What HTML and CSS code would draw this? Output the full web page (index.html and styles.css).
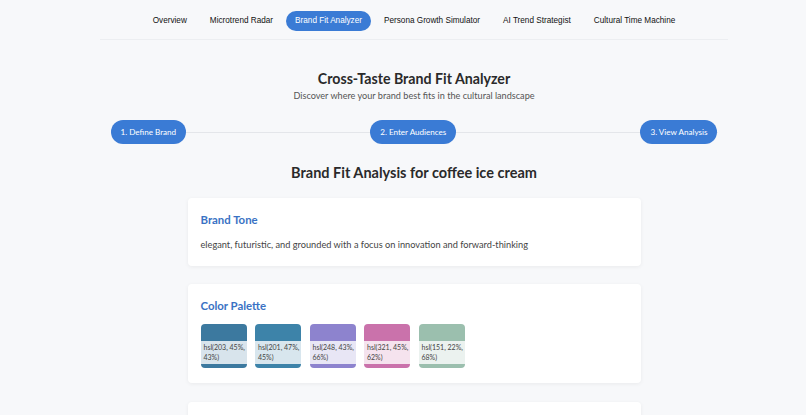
FILE: index.html
```html
<!DOCTYPE html>
<html lang="en">
<head>
<meta charset="utf-8">
<title>Cross-Taste Brand Fit Analyzer</title>
<link rel="stylesheet" href="styles.css">
</head>
<body>
<div class="app">
  <nav class="nav">
    <a class="nav-item">Overview</a>
    <a class="nav-item">Microtrend Radar</a>
    <a class="nav-item active">Brand Fit Analyzer</a>
    <a class="nav-item">Persona Growth Simulator</a>
    <a class="nav-item">AI Trend Strategist</a>
    <a class="nav-item">Cultural Time Machine</a>
  </nav>
  <main class="main">
    <h1 class="title">Cross-Taste Brand Fit Analyzer</h1>
    <p class="subtitle">Discover where your brand best fits in the cultural landscape</p>
    <div class="steps">
      <span class="step">1. Define Brand</span>
      <span class="step">2. Enter Audiences</span>
      <span class="step">3. View Analysis</span>
    </div>
    <h2 class="result-title">Brand Fit Analysis for coffee ice cream</h2>
    <section class="card">
      <h3 class="card-title">Brand Tone</h3>
      <p class="card-text">elegant, futuristic, and grounded with a focus on innovation and forward-thinking</p>
    </section>
    <section class="card">
      <h3 class="card-title">Color Palette</h3>
      <div class="palette">
        <div class="swatch" style="background: hsl(203, 45%, 43%)"><span class="swatch-label">hsl(203, 45%, 43%)</span></div>
        <div class="swatch" style="background: hsl(201, 47%, 45%)"><span class="swatch-label">hsl(201, 47%, 45%)</span></div>
        <div class="swatch" style="background: hsl(248, 43%, 66%)"><span class="swatch-label">hsl(248, 43%, 66%)</span></div>
        <div class="swatch" style="background: hsl(321, 45%, 62%)"><span class="swatch-label">hsl(321, 45%, 62%)</span></div>
        <div class="swatch" style="background: hsl(151, 22%, 68%)"><span class="swatch-label">hsl(151, 22%, 68%)</span></div>
      </div>
    </section>
    <section class="card card-next"></section>
  </main>
</div>
</body>
</html>
```
FILE: styles.css
```css
* { box-sizing: border-box; }
html, body { margin: 0; padding: 0; }
body {
  background: #f7f8fa;
  font-family: Lato, "Open Sans", sans-serif;
  color: #2b2b2b;
  overflow: hidden;
  height: 415px;
}
.app {
  padding-left: 22px;
}
.nav {
  width: 628px;
  margin: 0 auto;
  display: flex;
  justify-content: center;
  align-items: center;
  gap: 3px;
  padding: 11px 0 8px;
  border-bottom: 1px solid #eceef1;
}
.nav-item {
  font-family: "Liberation Sans", Arial, sans-serif;
  font-size: 8.2px;
  line-height: 10px;
  color: #111;
  padding: 5px 10px;
  border-radius: 10px;
  white-space: nowrap;
}
.nav-item.active {
  background: #3a7bd5;
  color: #fff;
  padding: 5px 9px;
}
.main {
  display: flex;
  flex-direction: column;
  align-items: center;
}
.title {
  margin: 29px 0 0;
  font-size: 14.2px;
  line-height: 20px;
  font-weight: 700;
  color: #2a2a2a;
}
.subtitle {
  margin: 1px 0 0;
  font-size: 9.15px;
  line-height: 12px;
  color: #555;
}
.steps {
  position: relative;
  width: 607px;
  margin-top: 18px;
  display: flex;
  justify-content: space-between;
  align-items: center;
}
.steps::before {
  content: "";
  position: absolute;
  left: 0;
  right: 0;
  top: 50%;
  height: 1px;
  background: #e4e6ea;
}
.step {
  position: relative;
  background: #3a7bd5;
  color: #fff;
  font-size: 8.1px;
  line-height: 12px;
  padding: 6px 10px;
  border-radius: 12px;
  white-space: nowrap;
}
.result-title {
  margin: 20px 0 0;
  font-size: 14.5px;
  line-height: 18px;
  font-weight: 700;
  color: #2a2a2a;
}
.card {
  width: 453px;
  background: #fff;
  border-radius: 4px;
  box-shadow: 0 1px 4px rgba(0, 0, 0, 0.06);
  padding: 15px 13px 15px;
  margin-top: 16px;
}
.card + .card { margin-top: 18px; }
.card-title {
  margin: 0;
  font-size: 11.4px;
  line-height: 14px;
  font-weight: 700;
  color: #3a72c4;
}
.card-text {
  margin: 12px 0 0;
  font-size: 9.23px;
  line-height: 12px;
  color: #444;
}
.palette {
  display: flex;
  gap: 8.5px;
  margin-top: 11px;
}
.swatch {
  width: 46px;
  height: 44px;
  border-radius: 4px;
  padding: 17px 0 4px;
  display: flex;
}
.swatch-label {
  flex: 1;
  background: rgba(255, 255, 255, 0.8);
  font-size: 7px;
  line-height: 9.5px;
  color: #444;
  padding: 2px 0 2px 3px;
}
.card.card-next {
  margin-top: 19px;
  height: 60px;
}
```
